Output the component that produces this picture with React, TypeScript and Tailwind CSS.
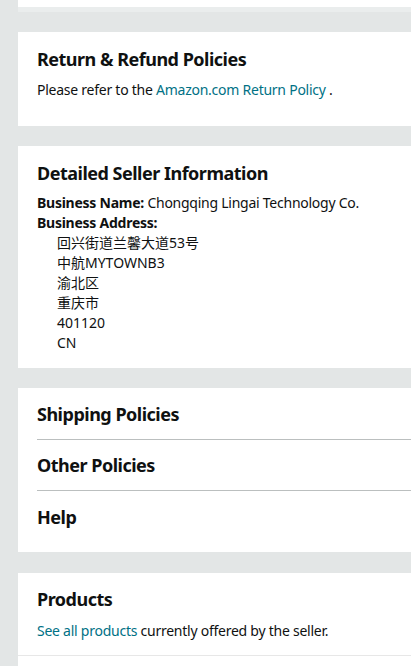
const FONT = '"Noto Sans", "Noto Sans CJK SC", sans-serif'

const ADDRESS = ['回兴街道兰馨大道53号', '中航MYTOWNB3', '渝北区', '重庆市', '401120', 'CN']

function Card({ children, className = '' }: { children: React.ReactNode; className?: string }) {
    return <div className={`ml-[18px] bg-white ${className}`}>{children}</div>
}

function Heading({ children }: { children: React.ReactNode }) {
    return <h2 className="text-[18px] leading-[24px] font-bold tracking-[-0.5px] text-[#0f1111]">{children}</h2>
}

export default function App() {
    return (
        <div
            className="min-h-screen bg-[#e3e6e6] text-[14px] leading-[20px] tracking-[-0.25px] text-[#0f1111]"
            style={{ fontFamily: FONT }}
        >
            {/* previous card tail */}
            <div className="ml-[18px] h-[12px] bg-white border-b-[5px] border-[#eaeded]" />

            <div className="h-[20px]" />

            {/* Return & Refund */}
            <Card className="pl-[19px] pt-[15px] pb-[26px]">
                <Heading>Return &amp; Refund Policies</Heading>
                <p className="mt-[9px]">
                    Please refer to the <a className="text-[#007185]">Amazon.com Return Policy</a> .
                </p>
            </Card>

            <div className="h-[20px]" />

            {/* Seller info */}
            <Card className="pl-[19px] pt-[15px] pb-[15px]">
                <Heading>Detailed Seller Information</Heading>
                <div className="mt-[8px]">
                    <p>
                        <span className="font-bold">Business Name:</span> Chongqing Lingai Technology Co.
                    </p>
                    <p className="font-bold">Business Address:</p>
                    <ul className="pl-[20px] tracking-normal">
                        {ADDRESS.map(line => (
                            <li key={line}>{line}</li>
                        ))}
                    </ul>
                </div>
            </Card>

            <div className="h-[20px]" />

            {/* Policy links */}
            <Card className="pl-[19px] pt-[1px] pb-[10px]">
                {['Shipping Policies', 'Other Policies', 'Help'].map((label, i) => (
                    <div
                        key={label}
                        className={`flex h-[51px] items-center ${i < 2 ? 'border-b border-[#bbbfbf]' : ''}`}
                    >
                        <span className="text-[18px] leading-[24px] font-bold tracking-[-0.5px]">{label}</span>
                    </div>
                ))}
            </Card>

            <div className="h-[21px]" />

            {/* Products */}
            <Card className="pl-[19px] pt-[14px] pb-[14px] border-b border-[#e7e7e7]">
                <Heading>Products</Heading>
                <p className="mt-[10px]">
                    <a className="text-[#007185]">See all products</a> currently offered by the seller.
                </p>
            </Card>
            <Card className="h-[40px]">{null}</Card>
        </div>
    )
}
